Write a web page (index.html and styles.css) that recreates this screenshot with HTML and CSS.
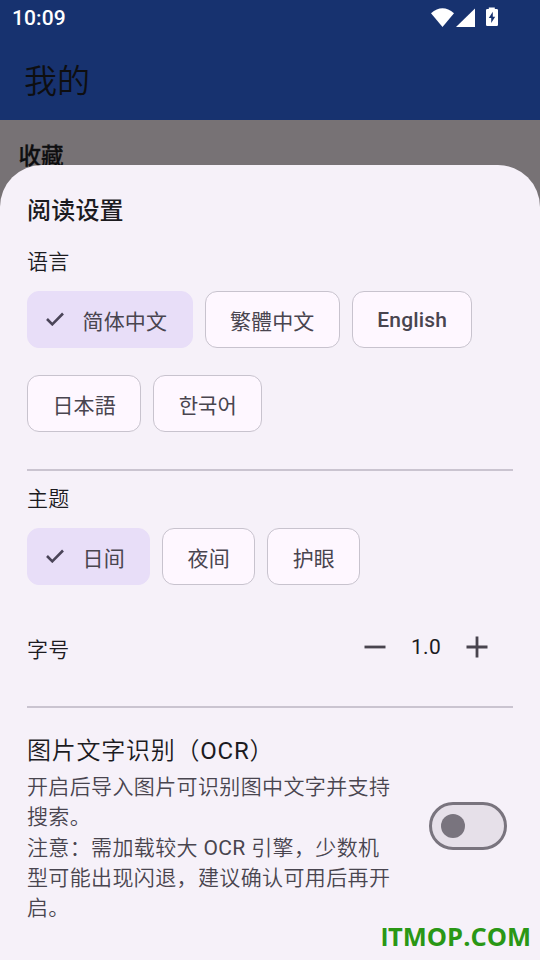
FILE: index.html
```html
<!DOCTYPE html>
<html lang="zh-CN">
<head>
<meta charset="utf-8">
<title>我的</title>
<link rel="stylesheet" href="styles.css">
</head>
<body>
<header class="appbar">
  <div class="status">
    <span class="clock">10:09</span>
    <svg class="status-icons" width="68" height="22" viewBox="0 0 68 22" fill="#fff">
      <path d="M0 5.2Q11.500 -4.800 23 5.200L11.500 19Z"/>
      <path d="M44 .5V19H25Z"/>
      <path fill-rule="evenodd" d="M57.800 -.500h6v1.500h2q1.200 0 1.200 1.200v14.600q0 1.200-1.200 1.200H56.200q-1.200 0-1.200-1.200V2.200Q55 1 56.200 1h1.600ZM61.800 3.800l-4 6.200h2.400v5l4-6.200h-2.400Z"/>
    </svg>
  </div>
  <h1 class="page-title">我的</h1>
</header>
<main class="backdrop"><h2 class="favorites">收藏</h2></main>
<section class="sheet">
  <h2 class="sheet-title">阅读设置</h2>
  <h3 class="label">语言</h3>
  <div class="chips">
    <button class="chip selected"><svg class="check" width="18" height="14" viewBox="0 0 18 14"><path d="M1 7l5.300 5.300L17 1.500"/></svg><span>简体中文</span></button>
    <button class="chip"><span>繁體中文</span></button>
    <button class="chip latin"><span>English</span></button>
    <button class="chip" lang="ja"><span>日本語</span></button>
    <button class="chip" lang="ko"><span>한국어</span></button>
  </div>
  <hr class="divider first">
  <h3 class="label theme">主题</h3>
  <div class="chips">
    <button class="chip selected"><svg class="check" width="18" height="14" viewBox="0 0 18 14"><path d="M1 7l5.300 5.300L17 1.500"/></svg><span>日间</span></button>
    <button class="chip"><span>夜间</span></button>
    <button class="chip"><span>护眼</span></button>
  </div>
  <div class="size-row">
    <span class="size-label">字号</span>
    <svg width="22" height="22" viewBox="0 0 22 22"><path class="stroke" d="M.5 11h21"/></svg>
    <span class="value">1.0</span>
    <svg width="22" height="22" viewBox="0 0 22 22"><path class="stroke" d="M.5 11h21M11 .5v21"/></svg>
  </div>
  <hr class="divider">
  <div class="ocr">
    <div class="ocr-text">
      <h3 class="ocr-title">图片文字识别（<span class="roman">OCR</span>）</h3>
      <p class="desc">开启后导入图片可识别图中文字并支持<br>搜索。<br>注意：需加载较大 <span class="roman">OCR</span> 引擎，少数机<br>型可能出现闪退，建议确认可用后再开<br>启。</p>
    </div>
    <div class="switch"><span class="thumb"></span></div>
  </div>
  <div class="watermark"><span class="bar-i">I</span>TMOP.COM</div>
</section>
</body>
</html>
```
FILE: styles.css
```css
* { box-sizing: border-box; }
body {
  margin: 0;
  height: 960px;
  position: relative;
  overflow: hidden;
  background: #777275;
  color: #1c1b1f;
  font-family: Roboto, "Noto Sans CJK SC", sans-serif;
  font-size: 21px;
}
h1, h2, h3, p { margin: 0; font-weight: 350; }
.appbar { height: 120px; background: #17326f; }
.status {
  display: flex;
  justify-content: space-between;
  height: 36px;
  padding: 8px 41px 0 12px;
}
.clock { color: #fff; font-size: 21px; font-weight: 500; line-height: 20px; letter-spacing: .1px; }
.status-icons { overflow: visible; }
.page-title { padding-left: 24px; font-size: 33px; line-height: 48px; margin-top: 22px; color: #0e0e10; }
.favorites { padding: 18px 0 0 18.5px; font-size: 22.5px; font-weight: 500; line-height: 36px; color: #0e0e10; -webkit-text-stroke: .3px #0e0e10; }
.sheet {
  position: absolute;
  inset: 165px 0 0;
  padding: 31px 27px 0;
  background: #f6f1f9;
  border-radius: 42px 42px 0 0;
}
.sheet-title { font-size: 24px; font-weight: 500; line-height: 30px; letter-spacing: .2px; }
.label { margin-top: 21px; font-size: 21px; line-height: 30px; height: 30px; letter-spacing: .35px; }
.chips { display: flex; flex-wrap: wrap; gap: 27px 12px; margin-top: 14px; }
.chip {
  display: flex;
  align-items: center;
  height: 57px;
  padding: 4px 24.4px 0;
  border: 1.5px solid #c8c3ce;
  border-radius: 12px;
  background: #fef7ff;
  color: #49454f;
  font: 400 21px/30px Roboto, "Noto Sans CJK SC", sans-serif;
  letter-spacing: .15px;
}
.latin { padding-top: 0; font-weight: 500; }
.selected { background: #e8def8; border-color: #e8def8; padding-left: 18px; }
.check { margin: -6px 18.5px 0 0; fill: none; stroke: #4a4458; stroke-width: 2.6; }
.divider { height: 1.5px; margin: 36px 0 0; border: 0; background: #cac4d0; }
.divider.first { margin-top: 37px; }
.theme { margin-top: 13.5px; }
.size-row { display: flex; align-items: center; height: 60px; margin-top: 32px; padding-right: 25px; }
.size-label { margin-right: auto; padding-top: 2px; letter-spacing: .35px; font-weight: 350; }
.stroke { fill: none; stroke: #49454f; stroke-width: 2.8; }
.value { width: 80px; text-align: center; letter-spacing: .35px; }
.size-row + .divider { margin-top: 29px; }
.divider + .ocr { margin-top: 25px; }
.ocr { display: flex; justify-content: space-between; }
.ocr-text { white-space: nowrap; }
.ocr-title { font-size: 24px; line-height: 36px; letter-spacing: .75px; }
.roman { font-weight: 400; }
.desc { margin-top: 3.5px; color: #49454f; line-height: 30.3px; letter-spacing: .375px; }
.switch {
  width: 78px;
  height: 48px;
  margin: 69px 6px 0 0;
  padding: 9px;
  border: 3px solid #79747e;
  border-radius: 24px;
  background: #e6e0e9;
}
.thumb { display: block; width: 24px; height: 24px; border-radius: 50%; background: #79747e; }
.watermark {
  position: absolute;
  right: 9px;
  bottom: 6px;
  color: #2a9715;
  font: 700 25.5px/34px "Open Sans", sans-serif;
}
.bar-i { font-family: "Liberation Sans", sans-serif; }
```
